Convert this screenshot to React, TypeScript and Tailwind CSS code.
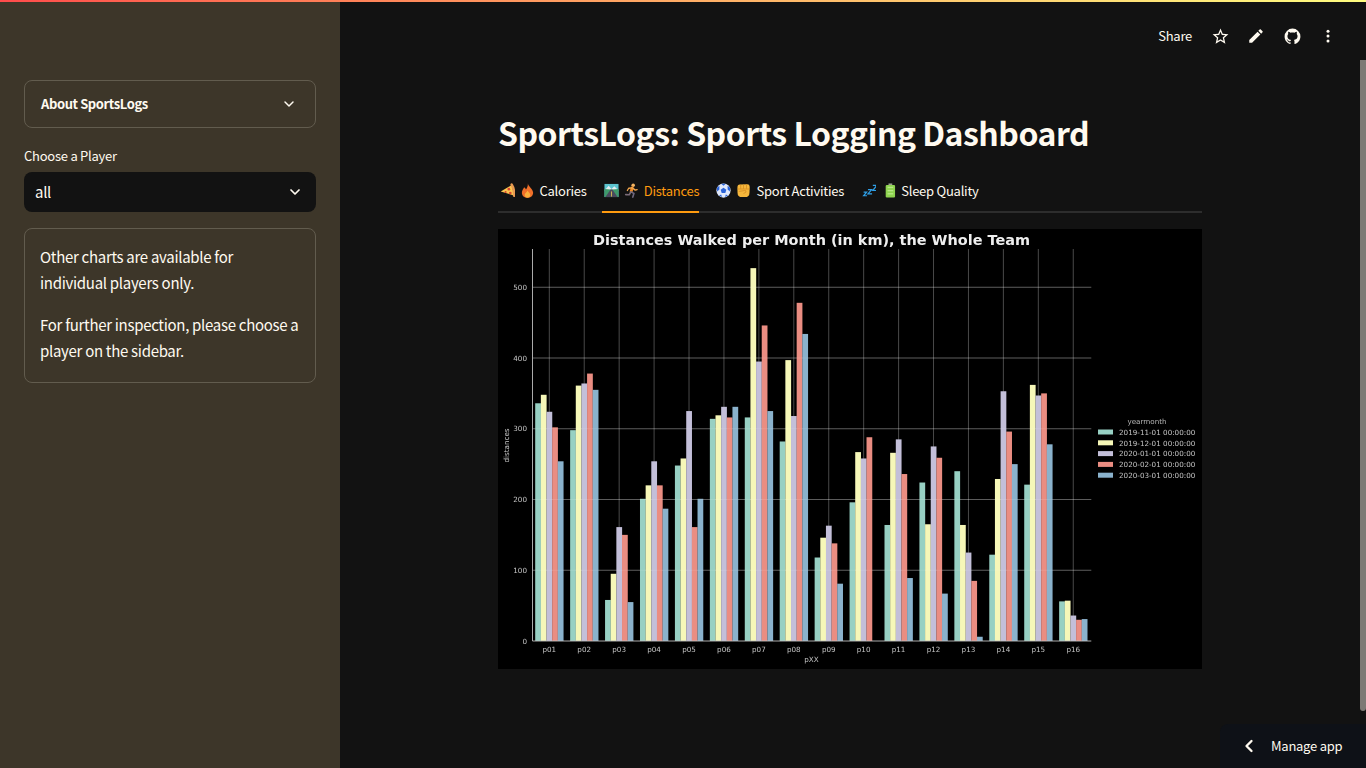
import { ChevronDown, ChevronLeft } from "lucide-react";

const data = [
  [336, 348, 324, 302, 254],
  [298, 361, 364, 378, 355],
  [58, 95, 161, 150, 55],
  [201, 220, 254, 220, 187],
  [248, 258, 325, 161, 201],
  [314, 319, 331, 316, 331],
  [316, 527, 395, 446, 325],
  [282, 397, 318, 478, 434],
  [118, 146, 163, 138, 81],
  [196, 267, 258, 288, 0],
  [164, 266, 285, 236, 89],
  [224, 165, 275, 259, 67],
  [240, 164, 125, 85, 6],
  [122, 229, 353, 296, 250],
  [221, 362, 347, 350, 278],
  [56, 57, 36, 30, 31],
];
const colors = ["#97d0c3", "#f6f7b8", "#c3bfd9", "#ea8d82", "#8ab2cc"];
const legend = ["2019-11-01 00:00:00", "2019-12-01 00:00:00", "2020-01-01 00:00:00", "2020-02-01 00:00:00", "2020-03-01 00:00:00"];
const x0 = 51.3;
const dx = 34.93;
const y0 = 412;
const sy = 0.7075;
const bw = 5.65;
const font = "'DejaVu Sans', sans-serif";

function Chart() {
  return (
    <svg width="704" height="440" viewBox="0 0 704 440" className="block bg-black blur-[0.5px]">
      <text x="313.5" y="16" textAnchor="middle" fontFamily={font} fontWeight="700" fontSize="14.45" fill="#eeeeee">
        Distances Walked per Month (in km), the Whole Team
      </text>
      {data.map((_, i) => (
        <line key={i} x1={x0 + i * dx} x2={x0 + i * dx} y1="20" y2="412" stroke="#ffffff" strokeOpacity="0.32" strokeWidth="0.9" />
      ))}
      {[100, 200, 300, 400, 500].map((v) => (
        <line key={v} x1="34.5" x2="593.3" y1={y0 - v * sy} y2={y0 - v * sy} stroke="#ffffff" strokeOpacity="0.32" strokeWidth="0.9" />
      ))}
      {data.map((g, i) =>
        g.map((v, j) => (
          <rect key={j} x={x0 + i * dx - 14.1 + j * bw} y={y0 - v * sy} width={bw + 0.1} height={v * sy} fill={colors[j]} />
        ))
      )}
      {[100, 200, 300, 400, 500].map((v) => (
        <line key={v} x1="34.5" x2="593.3" y1={y0 - v * sy} y2={y0 - v * sy} stroke="#ffffff" strokeOpacity="0.12" strokeWidth="0.9" />
      ))}
      {[0, 100, 200, 300, 400, 500].map((v) => (
        <text key={v} x="29" y={y0 - v * sy + 2.6} textAnchor="end" fontFamily={font} fontSize="7.2" fill="#c4c4c4">
          {v}
        </text>
      ))}
      {data.map((_, i) => (
        <text key={i} x={x0 + i * dx} y="423" textAnchor="middle" fontFamily={font} fontSize="7.2" fill="#c4c4c4">
          {"p" + String(i + 1).padStart(2, "0")}
        </text>
      ))}
      <line x1="34.5" x2="34.5" y1="20" y2="412" stroke="#bdbdbd" strokeWidth="0.9" />
      <line x1="34.5" x2="593.3" y1="412" y2="412" stroke="#bdbdbd" strokeWidth="0.9" />
      <text x="313.5" y="433" textAnchor="middle" fontFamily={font} fontSize="7.2" fill="#c4c4c4">pXX</text>
      <text transform="translate(10.5 216.5) rotate(-90)" textAnchor="middle" fontFamily={font} fontSize="7.2" fill="#c4c4c4">distances</text>
      <text x="649" y="195" textAnchor="middle" fontFamily={font} fontSize="7.2" fill="#b5b5b5">yearmonth</text>
      {legend.map((t, i) => (
        <g key={t}>
          <rect x="600" y={200.5 + i * 10.8} width="15" height="5" fill={colors[i]} />
          <text x="621" y={205.8 + i * 10.8} fontFamily={font} fontSize="7.2" fill="#c4c4c4">{t}</text>
        </g>
      ))}
    </svg>
  );
}

function Pizza() {
  return (
    <svg viewBox="0 0 16 16" className="w-[15px] h-[15px]">
      <path d="M0.8 9 L12.6 2 L15 13.4 Z" fill="#fcc64f" />
      <path d="M12.4 1.6 Q15.6 6.5 15 13.6" stroke="#e89a52" strokeWidth="2.6" strokeLinecap="round" fill="none" />
      <circle cx="9.4" cy="6.6" r="1.5" fill="#d8432f" />
      <circle cx="11" cy="10.6" r="1.4" fill="#d8432f" />
      <circle cx="6" cy="9.6" r="1.1" fill="#d8432f" />
    </svg>
  );
}
function Fire() {
  return (
    <svg viewBox="0 0 16 16" className="w-[15px] h-[15px]">
      <path d="M8.4 0.4 C9 4 14 6 14 10.4 C14 13.6 11.4 15.8 8 15.8 C4.6 15.8 2 13.6 2 10.4 C2 8 3.6 6.6 4.4 4.6 C5.4 5.4 6 6 6.4 7 C7.6 5 8.6 3 8.4 0.4Z" fill="#f0702a" />
      <path d="M8 8 C9 9.8 11 11 11 12.8 C11 14.6 9.4 15.7 8 15.7 C6.6 15.7 5 14.6 5 12.8 C5 11 7.4 10 8 8Z" fill="#fbb03b" />
    </svg>
  );
}
function Road() {
  return (
    <svg viewBox="0 0 16 16" className="w-[15px] h-[15px]">
      <rect x="0.5" y="1" width="15" height="14" fill="#5cc4cf" />
      <path d="M0.5 8 L5 3 L8 6.5 L11 3.5 L15.5 8 Z" fill="#e7eef0" />
      <path d="M0.5 6.5 L0.5 15 L15.5 15 L15.5 6.5 L9 7 L7 7 Z" fill="#3f9a6b" />
      <path d="M7 7 L9 7 L14.5 15 L1.5 15 Z" fill="#4a4a5e" />
      <path d="M8 9 L8 14.5" stroke="#f4d54f" strokeWidth="0.8" />
    </svg>
  );
}
function Runner() {
  return (
    <svg viewBox="0 0 16 16" className="w-[15px] h-[15px]" fill="none" strokeLinecap="round" strokeLinejoin="round">
      <circle cx="9.8" cy="2.4" r="1.9" fill="#f5b461" />
      <path d="M8.7 5.2 L7.6 9.2" stroke="#f08a24" strokeWidth="3" />
      <path d="M8.9 5.2 L12 7.6 L14 7" stroke="#f2a64c" strokeWidth="1.4" />
      <path d="M8.2 5.2 L5 5.6 L3.6 8" stroke="#f2a64c" strokeWidth="1.4" />
      <path d="M7.6 9.5 L10.6 11.2 L9.4 15" stroke="#6f6880" strokeWidth="1.7" />
      <path d="M7.2 9.8 L5.6 12.5 L1.8 12.4" stroke="#7a6c78" strokeWidth="1.7" />
    </svg>
  );
}
function Ball() {
  return (
    <svg viewBox="0 0 16 16" className="w-[15px] h-[15px]">
      <circle cx="8" cy="8" r="7.6" fill="#dfe8fb" />
      <path d="M8 5 L11 7.2 L9.9 10.7 L6.1 10.7 L5 7.2 Z" fill="#2a63d8" />
      <path d="M5.5 0.9 L10.5 0.9 L8 3 Z M1 5 L3.6 3 L3.6 7 L1.2 9 Z M15 5 L12.4 3 L12.4 7 L14.8 9 Z M3.2 13.4 L5.5 12.2 L6.4 14.9 Z M12.8 13.4 L10.5 12.2 L9.6 14.9 Z" fill="#2a63d8" />
    </svg>
  );
}
function Fist() {
  return (
    <svg viewBox="0 0 16 16" className="w-[15px] h-[15px]">
      <path d="M1.5 5 Q1.5 1.6 4 1.6 L12 1.4 Q14.6 1.4 14.6 4 L14.4 10 Q14.4 15 9.5 15 L6.5 15 Q1.6 15 1.6 10 Z" fill="#f6b73c" />
      <path d="M5 1.8 V6.2 M8 1.6 V6.2 M11.2 1.6 V6.2 M1.8 6.4 H14.2 M3 9 L9.4 8 Q11.4 7.8 10.4 10 L8 11.2" stroke="#d98f22" strokeWidth="0.9" fill="none" />
    </svg>
  );
}
function Zzz() {
  return (
    <svg viewBox="-2 0 16 16" className="w-[15px] h-[15px]" fill="none" stroke="#2f9fe6" strokeWidth="1.3">
      <path d="M0.8 9.8 H4 L0.8 13.6 H4.4" />
      <path d="M5.4 7 H9.4 L5.4 11.6 H9.8" />
      <path d="M10.6 2.6 H15 L10.6 8 H15.4" />
    </svg>
  );
}
function Battery() {
  return (
    <svg viewBox="-2 0 16 16" className="w-[15px] h-[15px]">
      <rect x="6" y="0.5" width="4" height="2" fill="#9aa08f" />
      <rect x="3" y="2" width="10" height="13.5" rx="1.2" fill="#8ed34f" />
      <rect x="5" y="4" width="6" height="1.4" fill="#b7e886" />
      <rect x="5" y="7.4" width="6" height="1.4" fill="#b7e886" />
      <rect x="5" y="10.8" width="6" height="1.4" fill="#b7e886" />
    </svg>
  );
}

function Tab({ a, b, label, active }: { a: React.ReactNode; b: React.ReactNode; label: string; active?: boolean }) {
  return (
    <div className={"flex items-center h-[41px] pb-[2px] mb-[-2px] border-b-2 " + (active ? "border-[#ff9b0f] text-[#ff9b0f]" : "border-transparent")}>
      <span className="flex items-center gap-[5px] ml-[1.5px] mr-[5px]">
        {a}
        {b}
      </span>
      <span className="text-[13px] tracking-[-0.25px] leading-5">{label}</span>
    </div>
  );
}

export default function App() {
  return (
    <div className="h-screen w-full overflow-hidden flex flex-col bg-[#121212] text-[#fffaf0] font-['Noto_Sans_CJK_JP','Noto_Sans',sans-serif] relative">
      <div className="h-[2px] shrink-0 bg-gradient-to-r from-[#ff4b4b] to-[#fffd80]" />
      <div className="flex flex-1 min-h-0">
        <aside className="w-[340px] shrink-0 bg-[#3d3629] px-6 pt-[78px]">
          <div className="h-12 rounded-lg border border-[#625c4e] flex items-center justify-between pl-4 pr-[18px]">
            <span className="text-[13px] tracking-[-0.4px] font-semibold">About SportsLogs</span>
            <ChevronDown size={16} strokeWidth={2.2} />
          </div>
          <div className="text-[13px] tracking-[-0.25px] leading-5 mt-[18px] mb-[6px]">Choose a Player</div>
          <div className="h-10 rounded-lg bg-[#121212] flex items-center justify-between pl-[11px] pr-[13px]">
            <span className="text-[15px] tracking-[-0.3px]">all</span>
            <ChevronDown size={16} strokeWidth={2.6} />
          </div>
          <div className="mt-4 rounded-lg border border-[#625c4e] px-[15px] pt-[15px] pb-[18px] text-[15px] tracking-[-0.3px] leading-[26px]">
            <p className="mb-4">Other charts are available for individual players only.</p>
            <p>For further inspection, please choose a player on the sidebar.</p>
          </div>
        </aside>
        <main className="flex-1 min-w-0 flex flex-col">
          <header className="h-[68px] shrink-0 flex items-center justify-end pr-5">
            <span className="text-[13px] tracking-[-0.25px] mr-[10px]">Share</span>
            <button className="w-9 h-9 flex items-center justify-center">
              <svg viewBox="0 0 24 24" className="w-[19px] h-[19px]" fill="currentColor">
                <path d="M22 9.24l-7.19-.62L12 2 9.19 8.63 2 9.24l5.46 4.73L5.82 21 12 17.27 18.18 21l-1.63-7.03L22 9.24zM12 15.4l-3.76 2.27 1-4.28-3.32-2.88 4.38-.38L12 6.1l1.71 4.04 4.38.38-3.32 2.88 1 4.28L12 15.4z" />
              </svg>
            </button>
            <button className="w-9 h-9 flex items-center justify-center">
              <svg viewBox="0 0 24 24" className="w-[18px] h-[18px]" fill="currentColor">
                <path d="M3 17.25V21h3.75L17.81 9.94l-3.75-3.75L3 17.25zM20.71 7.04c.39-.39.39-1.02 0-1.41l-2.34-2.34c-.39-.39-1.02-.39-1.41 0l-1.83 1.83 3.75 3.75 1.83-1.83z" />
              </svg>
            </button>
            <button className="w-9 h-9 flex items-center justify-center">
              <svg viewBox="0 0 24 24" className="w-[19px] h-[19px]" fill="currentColor">
                <path d="M12 2A10 10 0 0 0 2 12c0 4.42 2.87 8.17 6.84 9.5.5.08.66-.23.66-.5v-1.69c-2.77.6-3.36-1.34-3.36-1.34-.46-1.16-1.11-1.47-1.11-1.47-.91-.62.07-.6.07-.6 1 .07 1.53 1.03 1.53 1.03.87 1.52 2.34 1.07 2.91.83.09-.65.35-1.09.63-1.34-2.22-.25-4.55-1.11-4.55-4.92 0-1.11.38-2 1.03-2.71-.1-.25-.45-1.29.1-2.64 0 0 .84-.27 2.75 1.02.79-.22 1.65-.33 2.5-.33.85 0 1.71.11 2.5.33 1.91-1.29 2.75-1.02 2.75-1.02.55 1.35.2 2.39.1 2.64.65.71 1.03 1.6 1.03 2.71 0 3.82-2.34 4.66-4.57 4.91.36.31.69.92.69 1.85V21c0 .27.16.59.67.5C19.14 20.16 22 16.42 22 12A10 10 0 0 0 12 2z" />
              </svg>
            </button>
            <button className="w-9 h-9 flex items-center justify-center">
              <svg viewBox="0 0 24 24" className="w-[18px] h-[18px]" fill="currentColor">
                <circle cx="12" cy="5.5" r="2" />
                <circle cx="12" cy="12" r="2" />
                <circle cx="12" cy="18.5" r="2" />
              </svg>
            </button>
          </header>
          <div className="flex flex-1 min-h-0">
            <div className="flex-1 min-w-0">
              <div className="w-[704px] mx-auto">
                <h1 className="text-[32px] tracking-[-0.5px] leading-[48px] font-semibold mt-[38px]">SportsLogs: Sports Logging Dashboard</h1>
                <div className="flex gap-[15.7px] mt-4 border-b-2 border-[#2d2d2d]">
                  <Tab a={<Pizza />} b={<Fire />} label="Calories" />
                  <Tab a={<Road />} b={<Runner />} label="Distances" active />
                  <Tab a={<Ball />} b={<Fist />} label="Sport Activities" />
                  <Tab a={<Zzz />} b={<Battery />} label="Sleep Quality" />
                </div>
                <div className="mt-4">
                  <Chart />
                </div>
              </div>
            </div>
            <div className="w-[6px] shrink-0">
              <div className="h-[651px] -mt-[10px] rounded-b-[3px] bg-[#7d7a75]" />
            </div>
          </div>
        </main>
      </div>
      <div className="absolute right-0 bottom-0 w-[146px] h-11 bg-[#0e1117] rounded-tl-lg flex items-center pl-[19px] gap-3">
        <ChevronLeft size={20} strokeWidth={2.8} />
        <span className="text-[13px] tracking-[-0.25px]">Manage app</span>
      </div>
    </div>
  );
}
